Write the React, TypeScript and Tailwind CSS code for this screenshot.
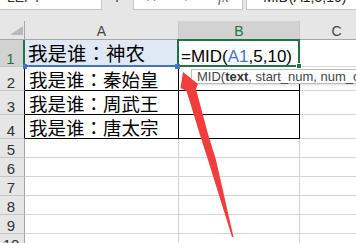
const cjk = "font-['Noto_Sans_CJK_SC','Noto_Sans',sans-serif]";

const names = ['秦始皇', '周武王', '唐太宗'];

function RowLabel({ n, className = '' }: { n: number; className?: string }) {
	return (
		<div
			className={`w-[25px] shrink-0 flex items-end justify-center pr-[2px] border-b border-b-[#c6c6c6] text-[15px] leading-[15px] ${className}`}
		>
			{n}
		</div>
	);
}

// colon centred in its cell, as the sheet's font draws it
function Who({ name }: { name: string }) {
	return (
		<>
			我是谁
			<span className="font-['Noto_Sans_CJK_TC',sans-serif]">：</span>
			{name}
		</>
	);
}

export default function App() {
	return (
		<div className="relative w-[356px] h-[243px] overflow-hidden bg-white font-['Liberation_Sans',sans-serif] text-black">
			{/* formula bar, cut off at the top */}
			<div className="flex h-[10px] overflow-hidden bg-[#e6e6e6] text-[#333]">
				<div className="w-[102px] shrink-0 bg-white border-r border-b border-[#c6c6c6] pl-[7px]">
					<div className="-mt-[10px] text-[14px] leading-[14px]">LEFT</div>
				</div>
				<div className="w-[31px] shrink-0 flex justify-center">
					<div className="ml-[-1px] w-[2px] h-[2px] bg-[#777]" />
				</div>
				<div className="w-[110px] shrink-0 flex bg-white border-l border-r border-b border-[#c6c6c6] text-[#666]">
					<div className="-mt-[11px] ml-[11px] text-[15px] leading-[15px]">✕</div>
					<div className="-mt-[11px] ml-[24px] text-[15px] leading-[15px]">✓</div>
					<div className="-mt-[10px] ml-[23px] italic text-[15px] leading-[15px] font-['Liberation_Serif',serif]">
						fx
					</div>
				</div>
				<div className="ml-[3px] flex-1 bg-white border-l border-b border-[#c6c6c6] pl-[8px] whitespace-nowrap">
					<div className="-mt-[10px] text-[14px] leading-[14px] text-[#222]">=MID(A1,5,10)</div>
				</div>
			</div>
			<div className="h-[11px] bg-[#e6e6e6]" />

			{/* column headers */}
			<div className="flex h-[19px] bg-[#e6e6e6] border-b border-[#a6a6a6] text-[14px] leading-[14px] text-[#444]">
				<div className="w-[25px] shrink-0 flex items-end justify-end pr-[1px] pb-[4px] border-r border-[#a6a6a6]">
					<svg width="13" height="9" viewBox="0 0 13 9">
						<polygon points="0,9 13,0 13,9" fill="#b8b8b8" />
					</svg>
				</div>
				<div className="w-[154px] shrink-0 flex items-end justify-center pb-px border-r border-[#c6c6c6]">
					A
				</div>
				<div className="w-[121px] shrink-0 flex items-end justify-center pb-px bg-[#d2d2d2] border-r border-[#c6c6c6] text-[#217346]">
					B
				</div>
				<div className="w-[74px] shrink-0 flex items-end justify-center pb-px border-r border-[#c6c6c6]">
					C
				</div>
			</div>

			{/* row 1 */}
			<div className="flex h-[27px]">
				<RowLabel n={1} className="bg-[#d2d2d2] border-r-2 border-r-[#217346] text-[#217346]" />
				<div
					className={`relative w-[154px] shrink-0 flex items-end pl-[3px] pb-[4px] bg-[#dfe8f5] border-r border-b border-black text-[19.5px] leading-[19.5px] whitespace-nowrap ${cjk}`}
				>
					<Who name="神农" />
					<div className="absolute left-0 right-0 -bottom-px h-[2px] bg-[#4472c4]" />
					<div className="absolute z-10 -left-[2px] -bottom-[3px] w-[4px] h-[5px] bg-[#4472c4]" />
					<div className="absolute z-10 -right-[2px] -bottom-[3px] w-[5px] h-[5px] bg-[#4472c4]" />
				</div>
				<div className="relative w-[121px] shrink-0 flex items-end pl-[2px] pb-px border-r border-b border-black text-[17px] leading-[17px] font-['Liberation_Sans_Narrow','Liberation_Sans',sans-serif] whitespace-nowrap">
					=MID(<span className="text-[#4472c4]">A1</span>,5,10)
					<div className="absolute -left-[2px] -top-px -right-px -bottom-px border-2 border-[#217346]" />
					<div className="absolute -right-[3px] -bottom-[3px] w-[6px] h-[6px] bg-[#217346] border border-white" />
				</div>
				<div className="w-[74px] shrink-0 border-r border-b border-[#d4d4d4]" />
			</div>

			{/* rows 2-4 */}
			{names.map((name, i) => (
				<div key={name} className="flex h-[24px]">
					<RowLabel n={i + 2} className="bg-[#e6e6e6] border-r border-r-black text-[#333]" />
					<div
						className={`w-[154px] shrink-0 flex items-end pl-[4px] pb-[2px] border-r border-b border-black text-[18.5px] leading-[18.5px] whitespace-nowrap ${cjk}`}
					>
						<Who name={name} />
					</div>
					<div className="w-[121px] shrink-0 border-r border-b border-black" />
					<div className="w-[74px] shrink-0 border-r border-b border-[#d4d4d4]" />
				</div>
			))}

			{/* rows 5-10 */}
			{[5, 6, 7, 8, 9, 10].map((n) => (
				<div key={n} className="flex h-[19px]">
					<RowLabel n={n} className="bg-[#e6e6e6] border-r border-r-[#a6a6a6] text-[#333]" />
					<div className="w-[154px] shrink-0 border-r border-b border-[#d4d4d4]" />
					<div className="w-[121px] shrink-0 border-r border-b border-[#d4d4d4]" />
					<div className="w-[74px] shrink-0 border-r border-b border-[#d4d4d4]" />
				</div>
			))}

			{/* function tooltip */}
			<div className="absolute left-[191px] top-[69px] h-[15px] w-[200px] pl-[5px] bg-white border border-[#bcbcbc] shadow-[1px_1px_2px_rgba(0,0,0,0.15)] text-[13px] leading-[13px] text-[#444] whitespace-nowrap">
				MID(<span className="font-bold text-[#333]">text</span>, start_num, num_chars)
			</div>

			{/* red arrow annotation */}
			<svg
				className="absolute left-0 top-0 pointer-events-none"
				width="356"
				height="243"
				viewBox="0 0 356 243"
			>
				<polygon
					points="183,72 198,84 196,89 208,134 216,160 233.5,237 232,237 208,160 200,135 186.5,91 180.5,88"
					fill="#f23d3d"
				/>
			</svg>
		</div>
	);
}
